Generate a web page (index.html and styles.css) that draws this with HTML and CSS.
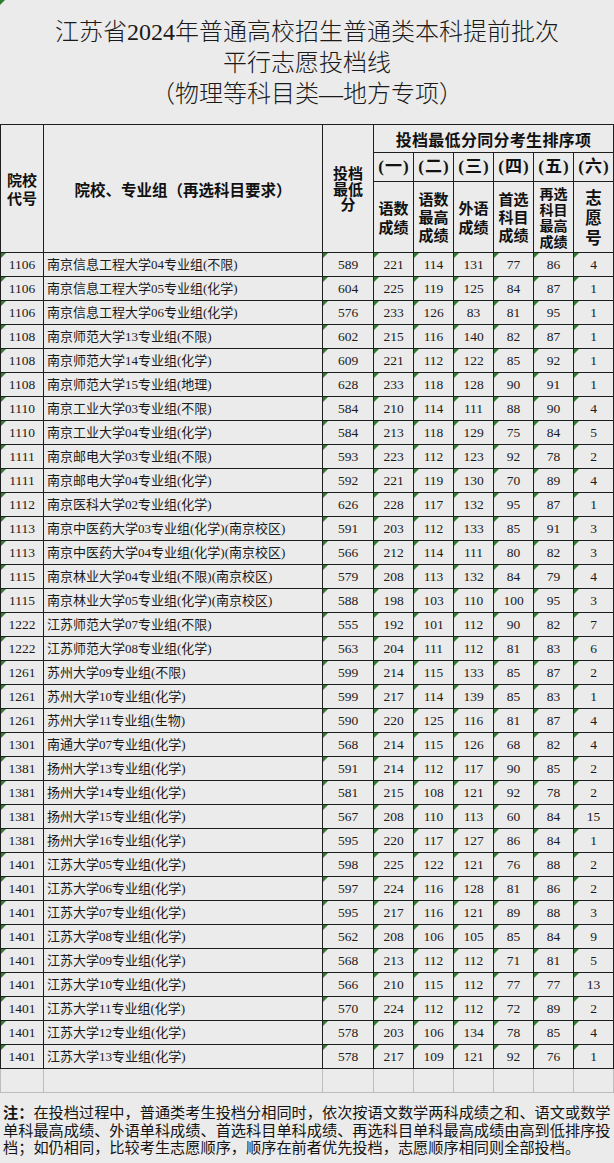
FILE: index.html
```html
<!DOCTYPE html>
<html lang="zh-CN">
<head>
<meta charset="utf-8">
<title>江苏省2024年普通高校招生普通类本科提前批次平行志愿投档线</title>
<link rel="stylesheet" href="styles.css">
</head>
<body>
<div class="page">
  <div class="title">
    <div>江苏省2024年普通高校招生普通类本科提前批次</div>
    <div>平行志愿投档线</div>
    <div>（物理等科目类—地方专项）</div>
  </div>
  <table class="grid">
    <colgroup>
      <col class="w-code"><col class="w-name"><col class="w-min">
      <col class="w-s"><col class="w-s"><col class="w-s"><col class="w-s"><col class="w-s"><col class="w-s">
    </colgroup>
    <thead>
      <tr class="hr1">
        <th rowspan="3" class="h-code">院校<br>代号</th>
        <th rowspan="3" class="h-name">院校、专业组（再选科目要求）</th>
        <th rowspan="3" class="h-min">投档<br>最低<br>分</th>
        <th colspan="6" class="h-group">投档最低分同分考生排序项</th>
      </tr>
      <tr class="hr2">
        <th class="h-idx">(一)</th><th class="h-idx">(二)</th><th class="h-idx">(三)</th>
        <th class="h-idx">(四)</th><th class="h-idx">(五)</th><th class="h-idx">(六)</th>
      </tr>
      <tr class="hr3">
        <th class="h-lab l2">语数<br>成绩</th>
        <th class="h-lab l3">语数<br>最高<br>成绩</th>
        <th class="h-lab l2">外语<br>成绩</th>
        <th class="h-lab l3">首选<br>科目<br>成绩</th>
        <th class="h-lab l4">再选<br>科目<br>最高<br>成绩</th>
        <th class="h-lab l1">志<br>愿<br>号</th>
      </tr>
    </thead>
    <tbody>
      <tr><td class="c">1106</td><td class="nm">南京信息工程大学04专业组(不限)</td><td class="n">589</td><td class="n">221</td><td class="n">114</td><td class="n">131</td><td class="n">77</td><td class="n">86</td><td class="n">4</td></tr>
      <tr><td class="c">1106</td><td class="nm">南京信息工程大学05专业组(化学)</td><td class="n">604</td><td class="n">225</td><td class="n">119</td><td class="n">125</td><td class="n">84</td><td class="n">87</td><td class="n">1</td></tr>
      <tr><td class="c">1106</td><td class="nm">南京信息工程大学06专业组(化学)</td><td class="n">576</td><td class="n">233</td><td class="n">126</td><td class="n">83</td><td class="n">81</td><td class="n">95</td><td class="n">1</td></tr>
      <tr><td class="c">1108</td><td class="nm">南京师范大学13专业组(不限)</td><td class="n">602</td><td class="n">215</td><td class="n">116</td><td class="n">140</td><td class="n">82</td><td class="n">87</td><td class="n">1</td></tr>
      <tr><td class="c">1108</td><td class="nm">南京师范大学14专业组(化学)</td><td class="n">609</td><td class="n">221</td><td class="n">112</td><td class="n">122</td><td class="n">85</td><td class="n">92</td><td class="n">1</td></tr>
      <tr><td class="c">1108</td><td class="nm">南京师范大学15专业组(地理)</td><td class="n">628</td><td class="n">233</td><td class="n">118</td><td class="n">128</td><td class="n">90</td><td class="n">91</td><td class="n">1</td></tr>
      <tr><td class="c">1110</td><td class="nm">南京工业大学03专业组(不限)</td><td class="n">584</td><td class="n">210</td><td class="n">114</td><td class="n">111</td><td class="n">88</td><td class="n">90</td><td class="n">4</td></tr>
      <tr><td class="c">1110</td><td class="nm">南京工业大学04专业组(化学)</td><td class="n">584</td><td class="n">213</td><td class="n">118</td><td class="n">129</td><td class="n">75</td><td class="n">84</td><td class="n">5</td></tr>
      <tr><td class="c">1111</td><td class="nm">南京邮电大学03专业组(不限)</td><td class="n">593</td><td class="n">223</td><td class="n">112</td><td class="n">123</td><td class="n">92</td><td class="n">78</td><td class="n">2</td></tr>
      <tr><td class="c">1111</td><td class="nm">南京邮电大学04专业组(化学)</td><td class="n">592</td><td class="n">221</td><td class="n">119</td><td class="n">130</td><td class="n">70</td><td class="n">89</td><td class="n">4</td></tr>
      <tr><td class="c">1112</td><td class="nm">南京医科大学02专业组(化学)</td><td class="n">626</td><td class="n">228</td><td class="n">117</td><td class="n">132</td><td class="n">95</td><td class="n">87</td><td class="n">1</td></tr>
      <tr><td class="c">1113</td><td class="nm">南京中医药大学03专业组(化学)(南京校区)</td><td class="n">591</td><td class="n">203</td><td class="n">112</td><td class="n">133</td><td class="n">85</td><td class="n">91</td><td class="n">3</td></tr>
      <tr><td class="c">1113</td><td class="nm">南京中医药大学04专业组(化学)(南京校区)</td><td class="n">566</td><td class="n">212</td><td class="n">114</td><td class="n">111</td><td class="n">80</td><td class="n">82</td><td class="n">3</td></tr>
      <tr><td class="c">1115</td><td class="nm">南京林业大学04专业组(不限)(南京校区)</td><td class="n">579</td><td class="n">208</td><td class="n">113</td><td class="n">132</td><td class="n">84</td><td class="n">79</td><td class="n">4</td></tr>
      <tr><td class="c">1115</td><td class="nm">南京林业大学05专业组(化学)(南京校区)</td><td class="n">588</td><td class="n">198</td><td class="n">103</td><td class="n">110</td><td class="n">100</td><td class="n">95</td><td class="n">3</td></tr>
      <tr><td class="c">1222</td><td class="nm">江苏师范大学07专业组(不限)</td><td class="n">555</td><td class="n">192</td><td class="n">101</td><td class="n">112</td><td class="n">90</td><td class="n">82</td><td class="n">7</td></tr>
      <tr><td class="c">1222</td><td class="nm">江苏师范大学08专业组(化学)</td><td class="n">563</td><td class="n">204</td><td class="n">111</td><td class="n">112</td><td class="n">81</td><td class="n">83</td><td class="n">6</td></tr>
      <tr><td class="c">1261</td><td class="nm">苏州大学09专业组(不限)</td><td class="n">599</td><td class="n">214</td><td class="n">115</td><td class="n">133</td><td class="n">85</td><td class="n">87</td><td class="n">2</td></tr>
      <tr><td class="c">1261</td><td class="nm">苏州大学10专业组(化学)</td><td class="n">599</td><td class="n">217</td><td class="n">114</td><td class="n">139</td><td class="n">85</td><td class="n">83</td><td class="n">1</td></tr>
      <tr><td class="c">1261</td><td class="nm">苏州大学11专业组(生物)</td><td class="n">590</td><td class="n">220</td><td class="n">125</td><td class="n">116</td><td class="n">81</td><td class="n">87</td><td class="n">4</td></tr>
      <tr><td class="c">1301</td><td class="nm">南通大学07专业组(化学)</td><td class="n">568</td><td class="n">214</td><td class="n">115</td><td class="n">126</td><td class="n">68</td><td class="n">82</td><td class="n">4</td></tr>
      <tr><td class="c">1381</td><td class="nm">扬州大学13专业组(化学)</td><td class="n">591</td><td class="n">214</td><td class="n">112</td><td class="n">117</td><td class="n">90</td><td class="n">85</td><td class="n">2</td></tr>
      <tr><td class="c">1381</td><td class="nm">扬州大学14专业组(化学)</td><td class="n">581</td><td class="n">215</td><td class="n">108</td><td class="n">121</td><td class="n">92</td><td class="n">78</td><td class="n">2</td></tr>
      <tr><td class="c">1381</td><td class="nm">扬州大学15专业组(化学)</td><td class="n">567</td><td class="n">208</td><td class="n">110</td><td class="n">113</td><td class="n">60</td><td class="n">84</td><td class="n">15</td></tr>
      <tr><td class="c">1381</td><td class="nm">扬州大学16专业组(化学)</td><td class="n">595</td><td class="n">220</td><td class="n">117</td><td class="n">127</td><td class="n">86</td><td class="n">84</td><td class="n">1</td></tr>
      <tr><td class="c">1401</td><td class="nm">江苏大学05专业组(化学)</td><td class="n">598</td><td class="n">225</td><td class="n">122</td><td class="n">121</td><td class="n">76</td><td class="n">88</td><td class="n">2</td></tr>
      <tr><td class="c">1401</td><td class="nm">江苏大学06专业组(化学)</td><td class="n">597</td><td class="n">224</td><td class="n">116</td><td class="n">128</td><td class="n">81</td><td class="n">86</td><td class="n">2</td></tr>
      <tr><td class="c">1401</td><td class="nm">江苏大学07专业组(化学)</td><td class="n">595</td><td class="n">217</td><td class="n">116</td><td class="n">121</td><td class="n">89</td><td class="n">88</td><td class="n">3</td></tr>
      <tr><td class="c">1401</td><td class="nm">江苏大学08专业组(化学)</td><td class="n">562</td><td class="n">208</td><td class="n">106</td><td class="n">105</td><td class="n">85</td><td class="n">84</td><td class="n">9</td></tr>
      <tr><td class="c">1401</td><td class="nm">江苏大学09专业组(化学)</td><td class="n">568</td><td class="n">213</td><td class="n">112</td><td class="n">112</td><td class="n">71</td><td class="n">81</td><td class="n">5</td></tr>
      <tr><td class="c">1401</td><td class="nm">江苏大学10专业组(化学)</td><td class="n">566</td><td class="n">210</td><td class="n">115</td><td class="n">112</td><td class="n">77</td><td class="n">77</td><td class="n">13</td></tr>
      <tr><td class="c">1401</td><td class="nm">江苏大学11专业组(化学)</td><td class="n">570</td><td class="n">224</td><td class="n">112</td><td class="n">112</td><td class="n">72</td><td class="n">89</td><td class="n">2</td></tr>
      <tr><td class="c">1401</td><td class="nm">江苏大学12专业组(化学)</td><td class="n">578</td><td class="n">203</td><td class="n">106</td><td class="n">134</td><td class="n">78</td><td class="n">85</td><td class="n">4</td></tr>
      <tr><td class="c">1401</td><td class="nm">江苏大学13专业组(化学)</td><td class="n">578</td><td class="n">217</td><td class="n">109</td><td class="n">121</td><td class="n">92</td><td class="n">76</td><td class="n">1</td></tr>
      <tr class="empty"><td></td><td></td><td></td><td></td><td></td><td></td><td></td><td></td><td></td></tr>
    </tbody>
  </table>
  <div class="note">
    <div class="note-line"><b>注：</b>在投档过程中，普通类考生投档分相同时，依次按语文数学两科成绩之和、语文或数学</div>
    <div class="note-line">单科最高成绩、外语单科成绩、首选科目单科成绩、再选科目单科最高成绩由高到低排序投</div>
    <div class="note-line">档；如仍相同，比较考生志愿顺序，顺序在前者优先投档，志愿顺序相同则全部投档。</div>
  </div>
</div>
</body>
</html>
```
FILE: styles.css
```css
html, body {
  margin: 0;
  padding: 0;
  background: #ebebeb;
}
body {
  color: #141414;
  font-family: "Noto Sans CJK SC", sans-serif;
}
.page {
  width: 614px;
  position: relative;
}
.page::before {
  content: "";
  position: absolute;
  left: 0;
  top: 0;
  border-top: 5px solid #2f7d2f;
  border-right: 5px solid transparent;
}
.title {
  height: 124px;
  box-sizing: border-box;
  padding-top: 17px;
  text-align: center;
  font-family: "Liberation Serif", "Noto Sans CJK SC", serif;
  font-size: 24px;
  font-weight: 300;
  line-height: 31px;
  color: #1a1a1a;
}
.grid {
  border-collapse: collapse;
  table-layout: fixed;
  width: 613px;
}
.w-code { width: 43px; }
.w-name { width: 279px; }
.w-min { width: 51px; }
.w-s { width: 40px; }
.grid th,
.grid td {
  border: 1px solid #1e1e1e;
  padding: 0;
  text-align: center;
  vertical-align: middle;
}
.grid th {
  font-family: "Noto Sans CJK SC", sans-serif;
  font-weight: 700;
  color: #111;
}
.hr1 { height: 28px; }
.hr2 { height: 29px; }
.hr3 { height: 71px; }
.h-code { font-size: 15px; line-height: 18px; }
.h-name { font-size: 15.5px; line-height: 20px; }
.h-min { font-size: 15px; line-height: 15.5px; padding-bottom: 4px; }
.h-group { font-size: 16px; line-height: 20px; letter-spacing: 0.3px; }
.h-idx {
  font-family: "Liberation Serif", "Noto Sans CJK SC", serif;
  font-size: 17px;
  line-height: 20px;
  letter-spacing: 1px;
  white-space: nowrap;
  text-indent: 1px;
}
.grid th.h-idx {
  font-family: "Liberation Serif", "Noto Sans CJK SC", serif;
}
.h-lab { font-size: 15px; }
.l1 { font-size: 16.5px; line-height: 20px; }
.l2 { line-height: 19px; }
.l3 { line-height: 18px; }
.l4 { font-size: 14px; line-height: 16px; }
.grid tbody tr { height: 24px; }
.grid td {
  position: relative;
  font-size: 13px;
  line-height: 16px;
}
.grid td.c,
.grid td.n {
  font-family: "Liberation Serif", serif;
  font-size: 13.5px;
  color: #1a1a1a;
}
.grid td.nm {
  text-align: left;
  padding-left: 3px;
  font-family: "Liberation Serif", "Noto Sans CJK SC", serif;
  font-size: 13px;
  white-space: nowrap;
  color: #1a1a1a;
}
.grid td.c::before,
.grid td.n::before {
  content: "";
  position: absolute;
  left: 0;
  top: 0;
  border-top: 5px solid #2f7d2f;
  border-right: 5px solid transparent;
}
.grid tr.empty td {
  border-color: #bdbdbd;
}
.note {
  box-sizing: border-box;
  height: 71px;
  padding: 10px 0 0 3px;
  font-size: 15.2px;
  line-height: 17.5px;
  color: #141414;
}
.note-line {
  white-space: nowrap;
}
.note b {
  font-weight: 700;
}
```
